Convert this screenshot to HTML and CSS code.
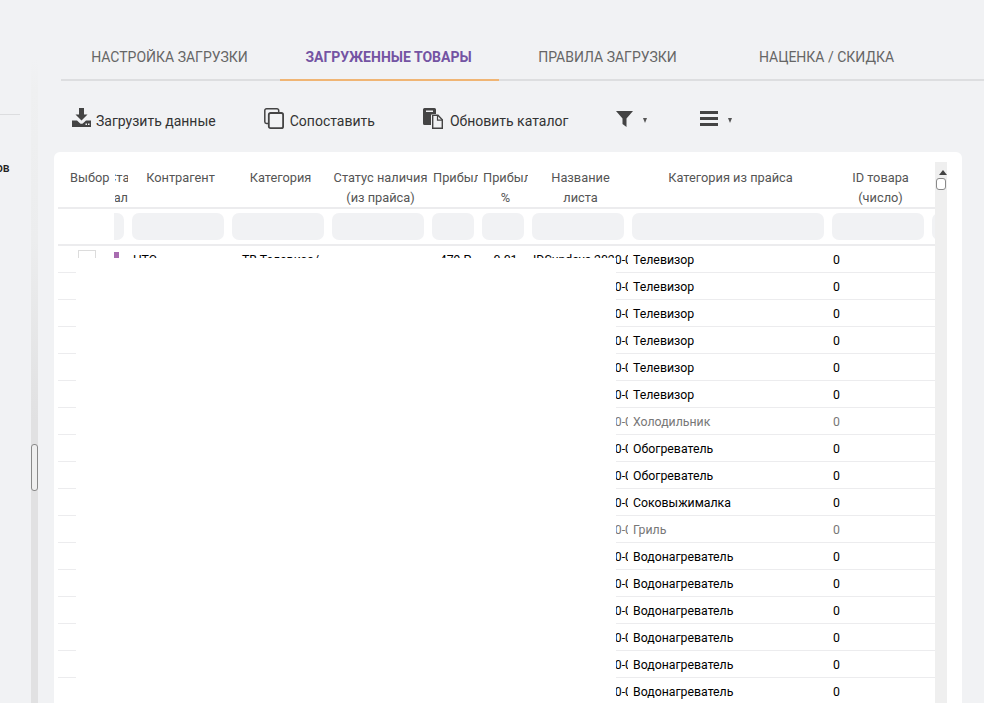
FILE: index.html
```html
<!DOCTYPE html>
<html>
<head>
  <title>Загруженные товары</title>
  <link rel="stylesheet" href="styles.css">
</head>
<body>
  <div class="page">
    <aside class="sidebar">
      <div class="side-nav">
        <div class="side-line"></div>
        <div class="side-item">ов</div>
      </div>
      <div class="side-scroll"><div class="side-thumb"></div></div>
    </aside>

    <main class="content">
      <nav class="tabs">
        <a class="tab">НАСТРОЙКА ЗАГРУЗКИ</a>
        <a class="tab active">ЗАГРУЖЕННЫЕ ТОВАРЫ</a>
        <a class="tab">ПРАВИЛА ЗАГРУЗКИ</a>
        <a class="tab">НАЦЕНКА / СКИДКА</a>
      </nav>

      <div class="toolbar">
        <button class="tool tool-load" type="button">
          <svg class="icon" viewBox="0 0 19 19"><path d="M7 0h5v6.500h3.500L9.500 12.500 3.500 6.500H7zM0 12.500h5l2.700 2.500a2.600 2.600 0 0 0 3.600 0L14 12.500h5V19H0z"/><rect x="13.500" y="15.500" width="1.500" height="1.500" fill="#f1f2f4"/><rect x="16" y="15.500" width="1.500" height="1.500" fill="#f1f2f4"/></svg>
          <span>Загрузить данные</span>
        </button>
        <button class="tool" type="button">
          <svg class="icon icon-doc" viewBox="0 0 20 21"><path d="M4 15.500H2.500A1.700 1.700 0 0 1 .8 13.800V2.500A1.700 1.700 0 0 1 2.500 .8H13a1.700 1.700 0 0 1 1.700 1.700V4" fill="none" stroke="#444" stroke-width="1.500"/><rect x="4.800" y="5" width="14.300" height="15.100" rx="1.700" fill="none" stroke="#444" stroke-width="1.800"/></svg>
          <span>Сопоставить</span>
        </button>
        <button class="tool tool-paste" type="button">
          <svg class="icon icon-doc" viewBox="0 0 20 21"><path d="M1.500 0h10A1.500 1.500 0 0 1 13 1.500V6H9.500A1.500 1.500 0 0 0 8 7.500V17H1.500A1.500 1.500 0 0 1 0 15.500V1.500A1.500 1.500 0 0 1 1.500 0z"/><rect x="3" y="2.500" width="7" height="1.500" fill="#f1f2f4"/><path d="M9.700 7.200h5.300l4.300 4.500v8.600H9.700z" fill="none" stroke="#444" stroke-width="1.400"/><path d="M14.500 7.500v4.700h4.800" fill="none" stroke="#444" stroke-width="1.200"/></svg>
          <span>Обновить каталог</span>
        </button>
        <button class="tool tool-filter" type="button">
          <svg class="icon-small" viewBox="0 0 17 16"><path d="M0 0h17L10.500 7.500V16L6.500 13V7.500z"/></svg>
          <i class="caret"></i>
        </button>
        <button class="tool tool-bars" type="button">
          <svg class="icon-small" viewBox="0 0 18 15"><path d="M0 0h18v3H0zM0 6h18v3H0zM0 12h18v3H0z"/></svg>
          <i class="caret"></i>
        </button>
      </div>

      <section class="card">
        <div class="grid-wrap">
          <div class="row head">
            <div class="cell c-sel">Выбор</div>
            <div class="cell c-stat">
              <div class="stat-clip">
                <div class="stat-top">Статус</div>
                <div class="stat-bottom">Материал</div>
              </div>
            </div>
            <div class="cell">Контрагент</div>
            <div class="cell">Категория</div>
            <div class="cell">Статус наличия<br>(из прайса)</div>
            <div class="cell c-nar">Прибыль</div>
            <div class="cell c-nar">Прибыль<br>%</div>
            <div class="cell">Название<br>листа</div>
            <div class="cell c-wide">Категория из прайса</div>
            <div class="cell">ID товара<br>(число)</div>
          </div>

          <div class="row filters">
            <div class="cell c-sel"></div>
            <div class="cell c-stat"><div class="input input-cut"></div></div>
            <div class="cell"><div class="input"></div></div>
            <div class="cell"><div class="input"></div></div>
            <div class="cell"><div class="input"></div></div>
            <div class="cell c-nar"><div class="input"></div></div>
            <div class="cell c-nar"><div class="input"></div></div>
            <div class="cell"><div class="input"></div></div>
            <div class="cell c-wide"><div class="input"></div></div>
            <div class="cell"><div class="input"></div></div>
            <div class="cell c-end"><div class="input"></div></div>
          </div>

          <div class="rows">
            <div class="row item">
              <div class="cell c-sel"><span class="check"></span></div>
              <div class="cell c-stat"><span class="status-icon"></span></div>
              <div class="cell">НТС</div>
              <div class="cell center">ТВ Телевизо/</div>
              <div class="cell"></div>
              <div class="cell c-nar center">479 Р</div>
              <div class="cell c-nar center">0.01</div>
              <div class="cell">IDSundays 2020-01-01</div>
              <div class="cell c-wide">Телевизор</div>
              <div class="cell">0</div>
            </div>
            <div class="row item"><div class="cell c-left"></div><div class="cell">IDSundays 2020-01-01</div><div class="cell c-wide">Телевизор</div><div class="cell">0</div></div>
            <div class="row item"><div class="cell c-left"></div><div class="cell">IDSundays 2020-01-01</div><div class="cell c-wide">Телевизор</div><div class="cell">0</div></div>
            <div class="row item"><div class="cell c-left"></div><div class="cell">IDSundays 2020-01-01</div><div class="cell c-wide">Телевизор</div><div class="cell">0</div></div>
            <div class="row item"><div class="cell c-left"></div><div class="cell">IDSundays 2020-01-01</div><div class="cell c-wide">Телевизор</div><div class="cell">0</div></div>
            <div class="row item"><div class="cell c-left"></div><div class="cell">IDSundays 2020-01-01</div><div class="cell c-wide">Телевизор</div><div class="cell">0</div></div>
            <div class="row item muted"><div class="cell c-left"></div><div class="cell">IDSundays 2020-01-01</div><div class="cell c-wide">Холодильник</div><div class="cell">0</div></div>
            <div class="row item"><div class="cell c-left"></div><div class="cell">IDSundays 2020-01-01</div><div class="cell c-wide">Обогреватель</div><div class="cell">0</div></div>
            <div class="row item"><div class="cell c-left"></div><div class="cell">IDSundays 2020-01-01</div><div class="cell c-wide">Обогреватель</div><div class="cell">0</div></div>
            <div class="row item"><div class="cell c-left"></div><div class="cell">IDSundays 2020-01-01</div><div class="cell c-wide">Соковыжималка</div><div class="cell">0</div></div>
            <div class="row item muted"><div class="cell c-left"></div><div class="cell">IDSundays 2020-01-01</div><div class="cell c-wide">Гриль</div><div class="cell">0</div></div>
            <div class="row item"><div class="cell c-left"></div><div class="cell">IDSundays 2020-01-01</div><div class="cell c-wide">Водонагреватель</div><div class="cell">0</div></div>
            <div class="row item"><div class="cell c-left"></div><div class="cell">IDSundays 2020-01-01</div><div class="cell c-wide">Водонагреватель</div><div class="cell">0</div></div>
            <div class="row item"><div class="cell c-left"></div><div class="cell">IDSundays 2020-01-01</div><div class="cell c-wide">Водонагреватель</div><div class="cell">0</div></div>
            <div class="row item"><div class="cell c-left"></div><div class="cell">IDSundays 2020-01-01</div><div class="cell c-wide">Водонагреватель</div><div class="cell">0</div></div>
            <div class="row item"><div class="cell c-left"></div><div class="cell">IDSundays 2020-01-01</div><div class="cell c-wide">Водонагреватель</div><div class="cell">0</div></div>
            <div class="row item"><div class="cell c-left"></div><div class="cell">IDSundays 2020-01-01</div><div class="cell c-wide">Водонагреватель</div><div class="cell">0</div></div>
          </div>

          <!-- frozen panel that did not repaint -->
          <div class="blank"></div>
        </div>

        <div class="grid-scroll">
          <i class="arrow-up"></i>
          <div class="grid-thumb"></div>
        </div>
      </section>
    </main>
  </div>
</body>
</html>
```

FILE: styles.css
```css
html, body {
  margin: 0;
  height: 100%;
  overflow: hidden;
}

body {
  background-color: #f1f2f4;
  font-family: Roboto, 'Liberation Sans', sans-serif;
  color: #444;
}

.page {
  display: flex;
  height: 703px;
  overflow: hidden;
}

/* left menu, mostly off screen */
.sidebar {
  display: flex;
  flex: 0 0 38px;
}

.side-nav {
  width: 31px;
  overflow: hidden;
  padding-top: 114px;
}

.side-line {
  width: 20px;
  height: 1px;
  background-color: #dcdddf;
}

.side-item {
  margin: 45px 0 0 -4px;
  font-size: 12px;
  line-height: 16px;
  font-weight: 500;
  color: #222;
}

.side-scroll {
  width: 7px;
  background: linear-gradient(#f1f2f4 60px, #eff0f1 90px, #ecedee 240px, #e1e1e2 420px);
  padding-top: 444px;
  box-sizing: border-box;
}

.side-thumb {
  width: 7px;
  height: 47px;
  box-sizing: border-box;
  border: 1px solid #8a8a8a;
  border-radius: 3px;
  background-color: #efefef;
}

.content {
  flex: 1;
  min-width: 0;
  padding: 0 22px 0 16px;
}

/* tabs */
.tabs {
  display: flex;
  height: 81px;
  margin: 0 -22px 0 7px;
  box-sizing: border-box;
  border-bottom: 2px solid #dddee0;
}

.tab {
  width: 219px;
  height: 81px;
  box-sizing: border-box;
  padding: 49px 2px 0 0;
  text-align: center;
  font-size: 14px;
  line-height: 17px;
  color: #666;
}

.tab.active {
  border-bottom: 2px solid #f0b574;
  font-weight: 700;
  color: #7454a3;
}

/* toolbar */
.toolbar {
  display: flex;
  align-items: flex-start;
  height: 71px;
  padding-top: 27px;
  box-sizing: border-box;
}

.tool {
  display: flex;
  align-items: flex-start;
  padding: 0;
  margin: 0 0 0 48px;
  border: none;
  background: none;
  font: inherit;
  font-size: 14px;
  line-height: 24px;
  color: #333;
}

.tool-load {
  margin-left: 18px;
}

.tool-bars {
  margin-left: 53px;
}

.tool span {
  margin: 1px 0 0 6px;
}

.tool-load span {
  margin-left: 5px;
}

.tool-paste span {
  margin-left: 7px;
}

.icon {
  width: 19px;
  height: 19px;
  fill: #444;
}

.icon-doc {
  width: 20px;
  height: 21px;
}

.icon-small {
  display: block;
  width: 17px;
  height: 16px;
  margin-top: 3px;
  fill: #444;
}

.tool-bars .icon-small {
  width: 18px;
  height: 15px;
}

.caret {
  width: 0;
  height: 0;
  margin: 10px 0 0 10px;
  border-left: 2.5px solid transparent;
  border-right: 2.5px solid transparent;
  border-top: 5px solid #555;
}

/* table card */
.card {
  display: flex;
  height: 600px;
  padding: 10px 15px 0 4px;
  box-sizing: border-box;
  background-color: #fff;
  border-radius: 6px 6px 0 0;
}

.grid-wrap {
  position: relative;
  width: 877px;
  overflow: hidden;
}

.row {
  display: flex;
}

.cell {
  flex: 0 0 100px;
  width: 100px;
  box-sizing: border-box;
  padding: 0 4px;
  overflow: hidden;
}

.c-sel {
  flex-basis: 52px;
  width: 52px;
  padding: 0;
}

.c-stat {
  flex-basis: 18px;
  width: 18px;
}

.c-nar {
  flex-basis: 50px;
  width: 50px;
}

.c-wide {
  flex-basis: 200px;
  width: 200px;
}

.c-left {
  flex-basis: 470px;
  width: 470px;
}

.c-end {
  flex-basis: 20px;
  width: 20px;
  padding-right: 0;
}

.head {
  height: 47px;
  box-sizing: border-box;
  border-bottom: 2px solid #ececee;
  padding-top: 6px;
  font-size: 12.8px;
  line-height: 20px;
  color: #555;
  text-align: center;
  white-space: nowrap;
}

.head .cell {
  padding: 0 0 0 5px;
}

.head .c-sel {
  overflow: visible;
  padding-left: 12px;
  text-align: left;
}

.stat-clip {
  overflow: hidden;
  text-align: left;
}

.stat-top {
  margin-left: -7px;
}

.stat-bottom {
  direction: rtl;
}

.filters {
  height: 37px;
  box-sizing: border-box;
  padding-top: 4px;
  border-bottom: 2px solid #ececee;
}

.input {
  width: 100%;
  height: 27px;
  background-color: #f1f2f4;
  border-radius: 7px;
}

.input-cut {
  border-radius: 0 7px 7px 0;
}

.filters .c-end .input {
  width: 30px;
}

.item {
  height: 27px;
  box-sizing: border-box;
  border-bottom: 1px solid #ececee;
  font-size: 12.3px;
  line-height: 29px;
  color: #000;
}

.item .cell {
  padding: 0 0 0 5px;
  white-space: nowrap;
}

.item .c-sel, .item .c-stat, .item .c-left {
  padding: 0;
}

.item .c-stat {
  padding-left: 4px;
}

.muted {
  color: #777;
}

.center {
  text-align: center;
}

.check {
  display: block;
  width: 18px;
  height: 18px;
  margin: 4px 0 0 20px;
  border: 1px solid #dcdcdc;
  box-sizing: border-box;
}

.status-icon {
  display: block;
  width: 5px;
  height: 10px;
  margin-top: 6px;
  background-color: #a86cb0;
}

.blank {
  position: absolute;
  left: 18px;
  top: 96px;
  bottom: 0;
  width: 540px;
  background-color: #fff;
}

/* grid scrollbar */
.grid-scroll {
  width: 12px;
  background-color: #efefef;
}

.arrow-up {
  display: block;
  width: 0;
  height: 0;
  margin: 8px 0 0 4px;
  border-left: 4px solid transparent;
  border-right: 4px solid transparent;
  border-bottom: 5px solid #444;
}

.grid-thumb {
  width: 10px;
  height: 12px;
  margin: 3px 0 0 1px;
  box-sizing: border-box;
  border: 1px solid #8a8a8a;
  border-radius: 3px;
  background-color: #fff;
}
```
